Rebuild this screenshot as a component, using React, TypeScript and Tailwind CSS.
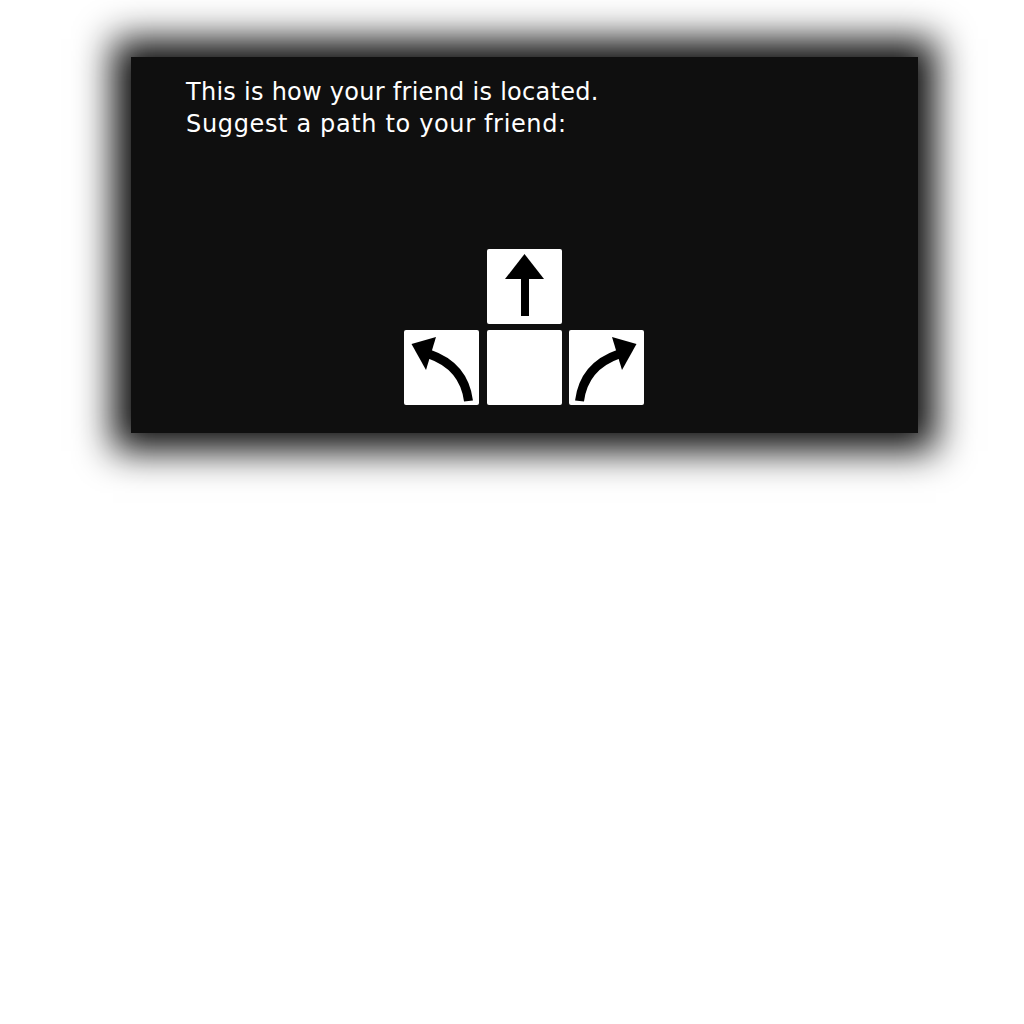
import React from "react";

function UpArrow() {
  return (
    <svg viewBox="0 0 75 75" className="w-full h-full">
      <polygon points="37.5,5 57,30 18,30" fill="#000" />
      <rect x="34" y="28" width="8" height="39" fill="#000" />
    </svg>
  );
}

function TurnArrow({ flip = false }: { flip?: boolean }) {
  return (
    <svg
      viewBox="0 0 75 75"
      className={`w-full h-full ${flip ? "-scale-x-100" : ""}`}
    >
      <path
        d="M 64.5 71 Q 60 36 25 24"
        stroke="#000"
        strokeWidth="9"
        fill="none"
      />
      <polygon points="7.5,14 32,7 22,40" fill="#000" />
    </svg>
  );
}

function Tile({ children }: { children?: React.ReactNode }) {
  return (
    <div className="w-[75px] h-[75px] bg-white rounded-[2px]">{children}</div>
  );
}

export default function App() {
  return (
    <div className="min-h-screen bg-white pt-[57px] pl-[131px]">
      <div className="w-[787px] h-[376px] bg-[#0f0f0f] shadow-[0_0_35px_18px_rgba(0,0,0,0.95)] flex flex-col pl-[55px] pt-[19px] pr-[55px] pb-[28px]">
        <div
          className="text-white text-[24px] leading-[32px] font-normal"
          style={{ fontFamily: "'DejaVu Sans', 'Liberation Sans', sans-serif" }}
        >
          <p className="tracking-[0.27px]">This is how your friend is located.</p>
          <p className="tracking-[0.65px]">Suggest a path to your friend:</p>
        </div>
        <div className="flex-1" />
        <div className="self-center -ml-[56px] -mr-[55px] grid grid-cols-[75px_75px_75px] gap-x-[7.5px] gap-y-[6px]">
          <div />
          <Tile>
            <UpArrow />
          </Tile>
          <div />
          <Tile>
            <TurnArrow />
          </Tile>
          <Tile />
          <Tile>
            <TurnArrow flip />
          </Tile>
        </div>
      </div>
    </div>
  );
}
